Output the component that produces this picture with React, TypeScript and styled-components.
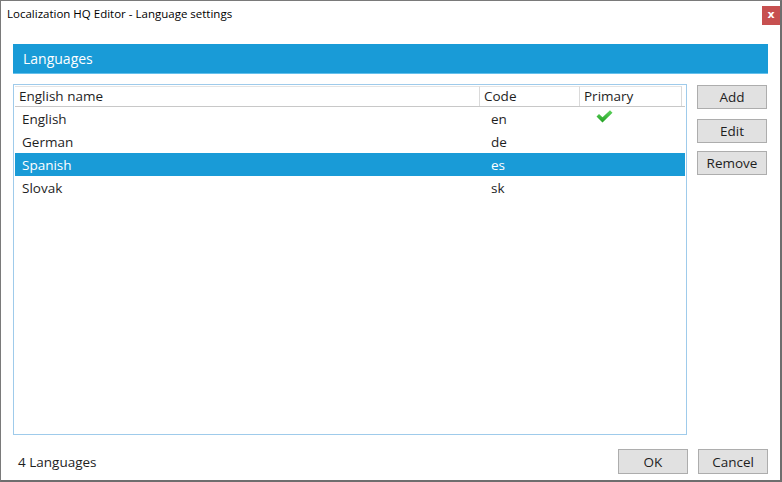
import React from "react";
import styled, { createGlobalStyle } from "styled-components";

const GlobalStyle = createGlobalStyle`
  html, body {
    margin: 0;
    padding: 0;
    background: #ffffff;
  }
  * {
    box-sizing: border-box;
  }
`;

const languages = [
  { name: "English", code: "en", primary: true },
  { name: "German", code: "de", primary: false },
  { name: "Spanish", code: "es", primary: false },
  { name: "Slovak", code: "sk", primary: false },
];

const SELECTED = 2;

const Check = () => (
  <svg width="17" height="13" viewBox="0 0 17 13">
    <defs>
      <linearGradient id="chk" x1="0" y1="0" x2="0" y2="1">
        <stop offset="0" stopColor="#5fd35f" />
        <stop offset="1" stopColor="#22a022" />
      </linearGradient>
    </defs>
    <path d="M0.5 6.5 L3 4 L6.5 7.3 L14 0.3 L16.5 2.8 L6.5 12.5 Z" fill="url(#chk)" />
  </svg>
);

const App: React.FC = () => {
  return (
    <Window>
      <GlobalStyle />
      <TitleBar>
        <Title>Localization HQ Editor - Language settings</Title>
        <CloseBtn>x</CloseBtn>
      </TitleBar>
      <Body>
        <SectionHeader>Languages</SectionHeader>
        <Main>
          <ListBox>
            <HeaderRow>
              <HeadCell>English name</HeadCell>
              <HeadCell>Code</HeadCell>
              <HeadCell>Primary</HeadCell>
            </HeaderRow>
            {languages.map((l, i) => (
              <Row key={l.code} selected={i === SELECTED}>
                <NameCell>{l.name}</NameCell>
                <CodeCell>{l.code}</CodeCell>
                <PrimaryCell>{l.primary && <Check />}</PrimaryCell>
              </Row>
            ))}
          </ListBox>
          <SideButtons>
            <Button>Add</Button>
            <Button style={{ marginTop: 10 }}>Edit</Button>
            <Button style={{ marginTop: 8 }}>Remove</Button>
          </SideButtons>
        </Main>
        <Footer>
          <Count>4 Languages</Count>
          <FooterButtons>
            <Button tall>OK</Button>
            <Button tall>Cancel</Button>
          </FooterButtons>
        </Footer>
      </Body>
    </Window>
  );
};

const Window = styled.div`
  width: 782px;
  height: 482px;
  border-left: 1px solid #7a7a7a;
  border-top: 1px solid #7a7a7a;
  border-right: 2px solid #6e6e6e;
  border-bottom: 2px solid #6e6e6e;
  background: #ffffff;
  display: flex;
  flex-direction: column;
  font-family: "Open Sans", "Noto Sans", sans-serif;
  color: #1e1e1e;
`;

const TitleBar = styled.div`
  height: 30px;
  display: flex;
  align-items: flex-start;
  justify-content: space-between;
  padding-left: 6px;
`;

const Title = styled.div`
  font-size: 11.5px;
  line-height: 14px;
  margin-top: 6px;
  color: #000;
`;

const CloseBtn = styled.div`
  width: 18px;
  height: 19px;
  margin-top: 5px;
  background: #c75050;
  color: #fff;
  font-family: "DejaVu Sans", sans-serif;
  font-weight: bold;
  font-size: 11px;
  line-height: 18px;
  text-align: center;
`;

const Body = styled.div`
  flex: 1;
  display: flex;
  flex-direction: column;
  padding: 13px 12px 6px 12px;
`;

const SectionHeader = styled.div`
  height: 30px;
  background: #199bd7;
  border-bottom: 1px solid #64c0ec;
  color: #fff;
  font-size: 14px;
  line-height: 29px;
  padding-left: 10px;
`;

const Main = styled.div`
  display: flex;
  gap: 10px;
  margin-top: 10px;
`;

const ListBox = styled.div`
  width: 674px;
  height: 351px;
  border: 1px solid #9fcbeb;
  padding: 1px 1px 0 1px;
  display: flex;
  flex-direction: column;
`;

const HeaderRow = styled.div`
  display: grid;
  grid-template-columns: 465px 100px 102px;
  height: 21px;
  flex-shrink: 0;
  border-bottom: 1px solid #c8c8c8;
`;

const HeadCell = styled.div`
  font-size: 13.5px;
  line-height: 19px;
  padding-left: 4px;
  border-right: 1px solid #dadada;
  border-top: 1px solid #e4e4e4;
`;

const Row = styled.div<{ selected?: boolean }>`
  display: grid;
  grid-template-columns: 465px 100px 102px;
  height: 23px;
  flex-shrink: 0;
  align-items: center;
  font-size: 13.5px;
  background: ${(p) => (p.selected ? "#199bd7" : "transparent")};
  color: ${(p) => (p.selected ? "#ffffff" : "#1e1e1e")};
  width: 670px;
`;

const NameCell = styled.div`
  padding-left: 7px;
`;

const CodeCell = styled.div`
  padding-left: 11px;
`;

const PrimaryCell = styled.div`
  display: flex;
  padding-left: 16px;
  padding-bottom: 4px;
`;

const SideButtons = styled.div`
  display: flex;
  flex-direction: column;
  padding-top: 1px;
`;

const Button = styled.button<{ tall?: boolean }>`
  width: 70px;
  height: ${(p) => (p.tall ? "25px" : "24px")};
  background: #e1e1e1;
  border: 1px solid #adadad;
  font-family: "Open Sans", "Noto Sans", sans-serif;
  font-size: 13.5px;
  color: #1e1e1e;
  padding: 0;
  line-height: 20px;
`;

const Footer = styled.div`
  margin-top: auto;
  display: flex;
  align-items: center;
  justify-content: space-between;
`;

const Count = styled.div`
  font-size: 13.5px;
  padding-left: 5px;
`;

const FooterButtons = styled.div`
  display: flex;
  gap: 10px;
`;

export default App;
